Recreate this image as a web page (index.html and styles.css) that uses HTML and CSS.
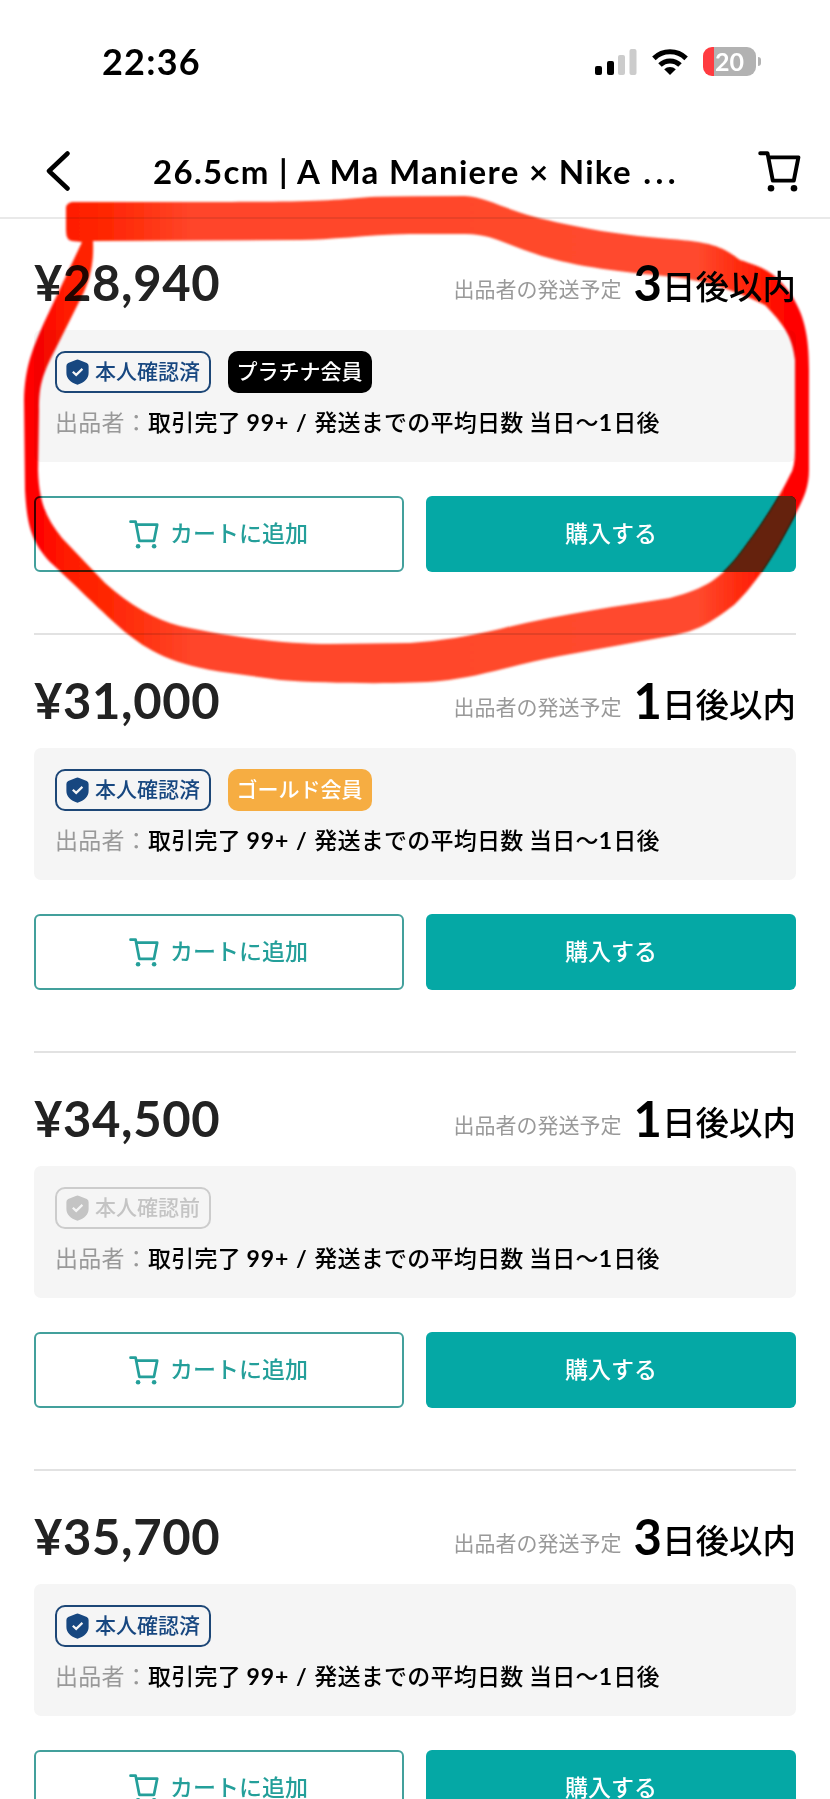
FILE: index.html
```html
<!DOCTYPE html>
<html lang="ja">
<head>
<meta charset="utf-8">
<title>26.5cm | A Ma Maniere × Nike</title>
<link rel="stylesheet" href="styles.css">
</head>
<body>
<svg class="defs" aria-hidden="true">
  <symbol id="cart" viewBox="0 0 43 41">
    <path d="M2.200 2.200H9.500L14.800 29.600H35.800L40.400 6.400H10.400" fill="none" stroke="currentColor" stroke-width="3.900" stroke-linecap="round" stroke-linejoin="round"/>
    <circle cx="13" cy="37.300" r="3.300" fill="currentColor"/><circle cx="36" cy="37.300" r="3.300" fill="currentColor"/>
  </symbol>
  <symbol id="shield" viewBox="0 0 23 26">
    <path d="M9.800 0.900Q11.500 0 13.200 0.900L20.800 4.100Q22.600 5 22.600 7V14C22.600 19.500 18.600 23.600 11.500 25.700C4.400 23.600 0.400 19.500 0.400 14V7Q0.400 5 2.200 4.100Z" fill="currentColor"/>
    <path d="M6.800 12.700L10.200 15.900L16.400 9.900" fill="none" stroke="#f5f5f5" stroke-width="2.200"/>
  </symbol>
</svg>
<div class="screen">
  <header class="header">
    <div class="status">
      <span class="time">22:36</span>
      <svg class="signal" viewBox="0 0 42 26">
        <rect x="0" y="17" width="7" height="9" rx="2"/><rect x="12" y="12" width="7" height="14" rx="2"/>
        <g fill="#ccc"><rect x="23" y="6" width="7" height="20" rx="2"/><rect x="34.500" y="0" width="7" height="26" rx="2"/></g>
      </svg>
      <svg class="wifi" viewBox="0 0 36 26">
        <g fill="none" stroke="#000" stroke-width="5"><path d="M1.900 9.400A23 23 0 0 1 34.100 9.400"/><path d="M8 16A14.300 14.300 0 0 1 28 16"/></g>
        <path d="M18 26L12.200 20.300A8.300 8.300 0 0 1 23.800 20.300Z"/>
      </svg>
      <div class="battery"><span>20</span></div><i class="nub"></i>
    </div>
    <div class="nav">
      <svg class="back" viewBox="0 0 24 40"><path d="M21.500 2.500L3 20L21.500 37.500" fill="none" stroke="#000" stroke-width="4.500" stroke-linecap="round" stroke-linejoin="round"/></svg>
      <h1 class="title">26.5cm | A Ma Maniere × Nike <span class="dots">...</span></h1>
      <svg class="nav-cart"><use href="#cart"/></svg>
    </div>
  </header>
  <main class="list">
    <section class="offer">
      <div class="summary"><span class="price">¥28,940</span><span class="ship">出品者の発送予定</span><span class="day">3</span><span class="within">日後以内</span></div>
      <div class="seller">
        <div class="badges"><span class="badge verified"><svg><use href="#shield"/></svg><span>本人確認済</span></span><span class="badge member platinum"><span>プラチナ会員</span></span></div>
        <p class="info"><span class="label">出品者：</span>取引完了 <span class="latin">99+ / </span>発送までの平均日数 当日〜<span class="latin">1</span>日後</p>
      </div>
      <div class="actions"><button class="btn add"><svg><use href="#cart"/></svg><span>カートに追加</span></button><button class="btn buy"><span>購入する</span></button></div>
    </section>
    <section class="offer">
      <div class="summary"><span class="price">¥31,000</span><span class="ship">出品者の発送予定</span><span class="day">1</span><span class="within">日後以内</span></div>
      <div class="seller">
        <div class="badges"><span class="badge verified"><svg><use href="#shield"/></svg><span>本人確認済</span></span><span class="badge member gold"><span>ゴールド会員</span></span></div>
        <p class="info"><span class="label">出品者：</span>取引完了 <span class="latin">99+ / </span>発送までの平均日数 当日〜<span class="latin">1</span>日後</p>
      </div>
      <div class="actions"><button class="btn add"><svg><use href="#cart"/></svg><span>カートに追加</span></button><button class="btn buy"><span>購入する</span></button></div>
    </section>
    <section class="offer">
      <div class="summary"><span class="price">¥34,500</span><span class="ship">出品者の発送予定</span><span class="day">1</span><span class="within">日後以内</span></div>
      <div class="seller">
        <div class="badges"><span class="badge verified pending"><svg><use href="#shield"/></svg><span>本人確認前</span></span></div>
        <p class="info"><span class="label">出品者：</span>取引完了 <span class="latin">99+ / </span>発送までの平均日数 当日〜<span class="latin">1</span>日後</p>
      </div>
      <div class="actions"><button class="btn add"><svg><use href="#cart"/></svg><span>カートに追加</span></button><button class="btn buy"><span>購入する</span></button></div>
    </section>
    <section class="offer">
      <div class="summary"><span class="price">¥35,700</span><span class="ship">出品者の発送予定</span><span class="day">3</span><span class="within">日後以内</span></div>
      <div class="seller">
        <div class="badges"><span class="badge verified"><svg><use href="#shield"/></svg><span>本人確認済</span></span></div>
        <p class="info"><span class="label">出品者：</span>取引完了 <span class="latin">99+ / </span>発送までの平均日数 当日〜<span class="latin">1</span>日後</p>
      </div>
      <div class="actions"><button class="btn add"><svg><use href="#cart"/></svg><span>カートに追加</span></button><button class="btn buy"><span>購入する</span></button></div>
    </section>
  </main>
  <svg class="marker" viewBox="0 0 830 720" aria-hidden="true">
    <defs>
      <linearGradient id="ink" gradientUnits="userSpaceOnUse" x1="0" y1="0" x2="830" y2="0">
        <stop offset=".045" stop-color="#ff0000"/><stop offset=".08" stop-color="#ff1c00"/><stop offset=".15" stop-color="#ff2c08"/><stop offset=".23" stop-color="#ff4529"/>
        <stop offset=".84" stop-color="#ff4a2e"/><stop offset=".9" stop-color="#ff2508"/><stop offset=".955" stop-color="#ff0000"/>
      </linearGradient>
      <filter id="soft" x="-5%" y="-5%" width="110%" height="110%"><feGaussianBlur stdDeviation="1"/></filter>
      <path id="loop" d="M66 207Q67 203 72 202L200 202C300 202 330 201 370 197Q390 196 465 196C485 197 505 209 535 217C570 226 610 234 670 239C710 242 722 246 740 260C765 268 774 272 790 293C804 314 809 335 809 370L809 470C809 486 804 498 797 511C780 544 760 580 734 605C714 620 700 631 670 636L560 656C520 663 480 677 440 681C410 684 330 684 280 680L230 673C170 665 148 650 125 632C105 615 70 580 50 562C31 541 27 525 25 490L24 400C25 368 31 350 50 310L82 242L72 241Q66 241 66 230ZM93 241C94 260 91 276 84 292L55 350C42 375 39 386 39 410L38 470C39 508 50 522 62 538L105 583C130 605 155 620 180 626C240 639 290 644 330 644L410 643C440 641 470 636 500 629C560 614 620 606 670 598C708 588 720 577 735 560C765 522 782 492 790 475Q795 468 795 450L795 360C792 335 783 324 765 305C730 288 700 279 664 276C600 270 560 263 530 252C500 242 490 234 465 234L410 234C365 235 330 240 300 240Z"/>
      <clipPath id="over-buy"><rect x="426" y="496" width="370" height="76" rx="6"/></clipPath>
    </defs>
    <use href="#loop" fill="url(#ink)" filter="url(#soft)"/>
  </svg>
  <svg class="marker shade" viewBox="0 0 830 720" aria-hidden="true">
    <g clip-path="url(#over-buy)"><use href="#loop" fill="#652407" filter="url(#soft)"/></g>
  </svg>
</div>
</body>
</html>
```
FILE: styles.css
```css
* { box-sizing: border-box; }
body { margin: 0; background: #fff; color: #000; font-family: "Noto Sans CJK JP", sans-serif; }
.defs { position: absolute; width: 0; height: 0; }
.screen { position: relative; width: 830px; height: 1799px; overflow: hidden; background: #fff; isolation: isolate; }

.header { height: 219px; border-bottom: 2px solid #e9e9e9; }
.status { display: flex; align-items: center; height: 123px; padding: 0 69px 0 102px; }
.time { flex: 1; padding-bottom: 2px; font: 700 36px/40px Lato, sans-serif; letter-spacing: 1.2px; }
.signal { width: 42px; height: 26px; margin-right: 15px; }
.wifi { width: 36px; height: 26px; margin-right: 15px; }
.battery { width: 53px; height: 29px; border-radius: 9px; background: linear-gradient(90deg, #ff3b40 11px, #b2b2b2 11px); color: #fff; text-align: center; font: 700 25px/28px Lato, sans-serif; }
.nub { width: 3px; height: 9px; margin-left: 2px; border-radius: 0 3px 3px 0; background: #b2b2b2; }
.nav { display: flex; align-items: center; height: 96px; padding: 0 29px 0 46px; }
.back { width: 24px; height: 40px; }
.title { flex: 1; margin: 0 0 1px 83px; white-space: pre; font: 700 33px/40px Lato, sans-serif; letter-spacing: 1.3px; }
.dots { margin-left: 2px; letter-spacing: 4.5px; }
.nav-cart { width: 43px; height: 41px; margin-top: 1px; }

.list { margin-top: -2px; padding: 0 34px; }
.offer { height: 418px; border-bottom: 2px solid #e2e2e2; }
.summary { display: flex; align-items: baseline; height: 113px; padding-top: 35px; line-height: 60px; white-space: nowrap; }
.price { flex: 1; color: #222; font-family: Lato, sans-serif; font-weight: 700; font-size: 49px; letter-spacing: .6px; }
.ship { color: #999; font-size: 21px; transform: translateY(-4px); }
.day { margin-left: 12px; font-family: Lato, sans-serif; font-weight: 700; font-size: 49px; }
.within { font-size: 33.500px; font-weight: 500; transform: translateY(-2px); }
.seller { height: 132px; padding: 21px; border-radius: 7px; background: #f5f5f5; }
.badges { display: flex; gap: 17px; }
.badge { display: flex; align-items: center; justify-content: center; height: 42px; border-radius: 10px; font-size: 21px; font-weight: 500; line-height: 36px; white-space: nowrap; }
.badge span { padding-bottom: 4px; }
.verified { width: 156px; gap: 6px; border: 2px solid #1d4777; color: #174780; }
.verified svg { width: 23px; height: 26px; }
.pending { border-color: #ccc; color: #c4c4c4; }
.member { width: 144px; padding-right: 1px; color: #fff; }
.platinum { background: #000; }
.gold { background: #f6ad42; }
.info { margin: 10px 0 0; font-size: 23px; font-weight: 500; line-height: 36px; letter-spacing: .25px; white-space: nowrap; }
.label { color: #999; font-weight: 400; }
.latin { font-family: Lato, sans-serif; font-weight: 700; letter-spacing: 1px; }
.actions { display: grid; grid-template-columns: 1fr 1fr; gap: 22px; margin-top: 34px; }
.btn { display: flex; align-items: center; justify-content: center; height: 76px; padding: 0; border: 0; border-radius: 6px; font: 500 23px/40px "Noto Sans CJK JP", sans-serif; }
.btn span { padding-bottom: 4px; }
.add { gap: 11px; padding-right: 1px; border: 2px solid #43a09c; background: #fff; color: #249f9a; }
.add svg { width: 30px; height: 29px; }
.buy { background: #05a8a5; color: #fff; }

.marker { position: absolute; top: 0; left: 0; width: 830px; height: 720px; mix-blend-mode: multiply; pointer-events: none; }
.shade { mix-blend-mode: normal; }
```
